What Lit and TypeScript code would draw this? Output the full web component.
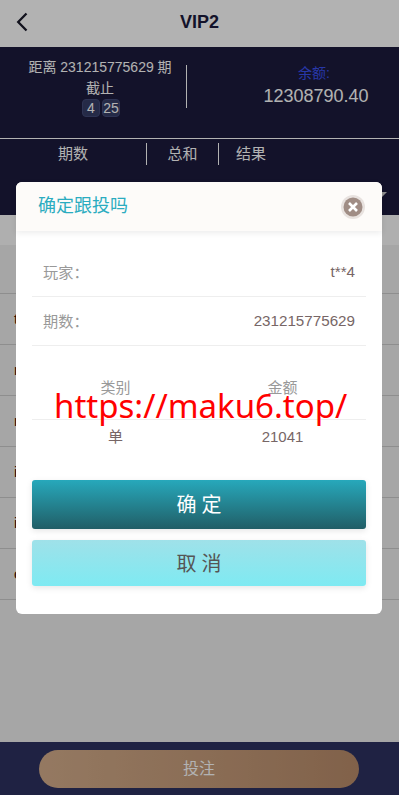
import { LitElement, html, css } from "lit";
import { customElement } from "lit/decorators.js";

@customElement("app-root")
export class AppRoot extends LitElement {
  static styles = css`
    :host { display: block; width: 100%; height: 795px; position: relative; overflow: hidden; font-family: "Liberation Sans", "Noto Sans CJK SC", sans-serif; background: #fff; }
    .page { width: 399px; height: 795px; display: flex; flex-direction: column; position: relative; }
    .top { height: 47px; flex: none; box-sizing: border-box; padding-bottom: 2px; background: #fff; display: flex; align-items: center; justify-content: center; position: relative; color: #1c1b3d; font-size: 18px; font-weight: 700; }
    .back { position: absolute; left: 15px; top: 11px; }
    .panel { background: #1c1b3d; flex: none; height: 168px; color: #fff; display: flex; flex-direction: column; position: relative; }
    .caret { position: absolute; right: 12px; top: 145px; border: 5px solid transparent; border-top: 5px solid #ccc; border-bottom: 0; }
    .stats { height: 91px; flex: none; display: flex; border-bottom: 1px solid #fff; }
    .count { width: 200px; margin-right: -14px; flex: none; text-align: center; font-size: 14px; line-height: 21px; padding-top: 10px; box-sizing: border-box; }
    .count p { margin: 0; }
    .boxes { display: flex; justify-content: center; gap: 2px; padding-left: 2px; }
    .box { width: 18px; height: 18px; line-height: 16px; box-sizing: border-box; border: 1px solid #434a78; border-radius: 4px; background: #363d66; font-size: 14px; }
    .balance { flex: 1; margin-top: 18px; height: 43px; border-left: 1px solid #fff; text-align: center; padding-left: 46px; }
    .bal-label { color: #3a50f0; font-size: 14px; line-height: 16px; padding-right: 4px; }
    .bal-val { font-size: 18px; line-height: 30px; }
    .heads { display: flex; font-size: 15px; height: 22px; margin-top: 4px; line-height: 22px; }
    .h1 { width: 146px; text-align: center; border-right: 1px solid #fff; }
    .h2 { width: 71px; text-align: center; border-right: 1px solid #fff; }
    .h3 { padding-left: 17px; }
    .strip { height: 30px; flex: none; background: #fbfbfb; }
    .rows { flex: 1; background: #eee; }
    .rowhead { height: 48px; border-bottom: 1px solid #ccc; }
    .row { height: 50px; border-bottom: 1px solid #ccc; color: #3a1000; font-size: 15px; line-height: 50px; padding-left: 14px; }
    .bar { height: 53px; flex: none; background: #2d3260; display: flex; align-items: center; justify-content: center; }
    .submit { width: 320px; height: 38px; box-sizing: border-box; padding-bottom: 3px; margin-right: 1px; border-radius: 19px; background: linear-gradient(90deg, #d5ae8c, #b98c6a); color: #fff; font-size: 16px; display: flex; align-items: center; justify-content: center; }
    .mask { position: absolute; left: 0; top: 0; bottom: 0; width: 399px; background: rgba(0,0,0,.3); }
    .modal { position: absolute; left: 16px; top: 182px; width: 366px; height: 432px; background: #fff; border-radius: 6px; display: flex; flex-direction: column; }
    .mhead { height: 49px; flex: none; background: #fdfbf9; border-radius: 6px 6px 0 0; box-shadow: 0 2px 6px rgba(0,0,0,.08); display: flex; align-items: center; justify-content: space-between; padding: 0 17px 0 22px; color: #2bacc0; font-size: 18px; }
    .mhead span { margin-bottom: 6px; }
    .close { width: 24px; height: 24px; }
    .mbody { padding: 17px 16px 0; display: flex; flex-direction: column; flex: 1; }
    .line { height: 46px; padding: 0 11px 2px; border-bottom: 1px solid #eee; display: flex; align-items: center; justify-content: space-between; font-size: 15.2px; color: #999; }
    .line b { font-weight: 400; color: #766; }
    .tb { display: grid; grid-template-columns: 1fr 1fr; text-align: center; font-size: 15px; margin-top: 30px; }
    .th { color: #999; height: 43px; line-height: 24px; border-bottom: 1px solid #eee; }
    .td { color: #766; height: 34px; line-height: 34px; }
    .btn { box-sizing: border-box; height: 49px; border-radius: 3px; display: flex; align-items: center; justify-content: center; font-size: 20px; letter-spacing: 5px; padding: 0 0 2px 5px; box-shadow: 0 2px 6px rgba(0,0,0,.1); }
    .ok { background: linear-gradient(180deg, #27a8bb, #215e66); color: #fff; margin-top: 26px; }
    .no { background: linear-gradient(180deg, #9fe1e9, #7eeaf2); color: #555; height: 46px; margin-top: 11px; }
    .mark { position: absolute; left: 54px; top: 382px; color: #f00; font-size: 33px; line-height: 48px; font-family: "Noto Sans", sans-serif; white-space: nowrap; }
  `;

  render() {
    return html`
      <div class="page">
        <div class="top">
          <svg class="back" width="16" height="24" viewBox="0 0 16 24" fill="none" stroke="#1a1a2a" stroke-width="2.3"><path d="M11.5 2.5 L3.2 11 L11.5 19.5"/></svg>
          VIP2
        </div>
        <div class="panel">
          <div class="stats">
            <div class="count">
              <p>距离 231215775629 期</p>
              <p>截止</p>
              <div class="boxes"><span class="box">4</span><span class="box">25</span></div>
            </div>
            <div class="balance">
              <div class="bal-label">余额:</div>
              <div class="bal-val">12308790.40</div>
            </div>
          </div>
          <div class="heads"><div class="h1">期数</div><div class="h2">总和</div><div class="h3">结果</div></div>
          <div class="caret"></div>
        </div>
        <div class="strip"></div>
        <div class="rows">
          <div class="rowhead"></div>
          ${["t", "n", "n", "i", "i", "c"].map((c) => html`<div class="row">${c}</div>`)}
        </div>
        <div class="bar"><div class="submit">投注</div></div>
      </div>
      <div class="mask"></div>
      <div class="modal">
        <div class="mhead">
          <span>确定跟投吗</span>
          <svg class="close" viewBox="0 0 24 24"><circle cx="12" cy="12" r="12" fill="#e8e2df"/><circle cx="12" cy="12" r="9.5" fill="#a08d85"/><path d="M8 8 L16 16 M16 8 L8 16" stroke="#fff" stroke-width="2.6"/></svg>
        </div>
        <div class="mbody">
          <div class="line"><span>玩家：</span><b>t**4</b></div>
          <div class="line"><span>期数：</span><b>231215775629</b></div>
          <div class="tb">
            <div class="th">类别</div><div class="th">金额</div>
            <div class="td">单</div><div class="td">21041</div>
          </div>
          <div class="btn ok">确定</div>
          <div class="btn no">取消</div>
        </div>
      </div>
      <div class="mark">https://maku6.top/</div>
    `;
  }
}
